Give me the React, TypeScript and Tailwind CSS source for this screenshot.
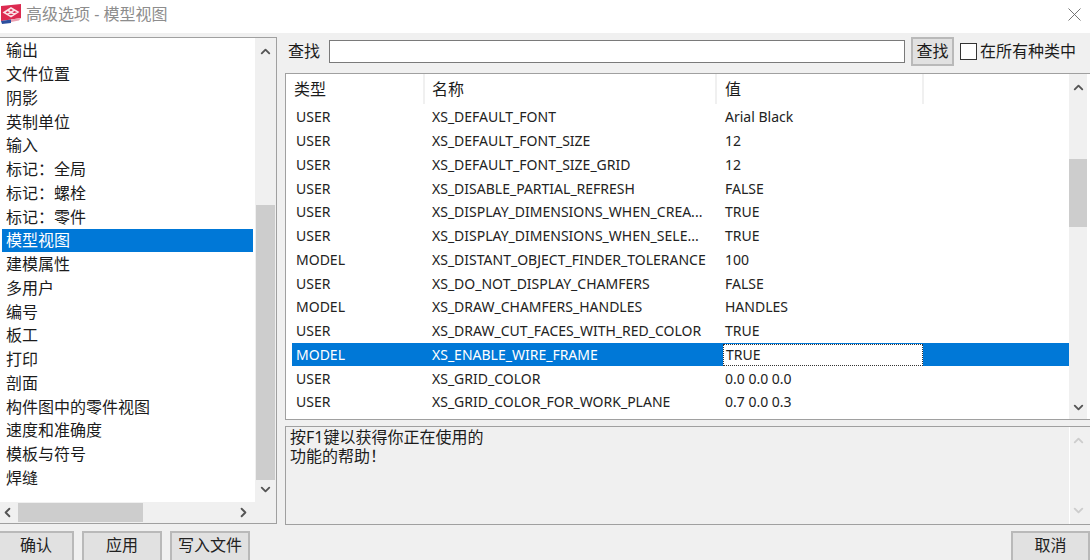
import { ChevronDown, ChevronLeft, ChevronRight, ChevronUp } from 'lucide-react'

const font = "font-['Noto_Sans','Noto_Sans_CJK_SC',sans-serif]"

const categories = [
  '输出', '文件位置', '阴影', '英制单位', '输入', '标记：全局', '标记：螺栓', '标记：零件', '模型视图',
  '建模属性', '多用户', '编号', '板工', '打印', '剖面', '构件图中的零件视图', '速度和准确度', '模板与符号', '焊缝',
]

const rows = [
  ['USER', 'XS_DEFAULT_FONT', 'Arial Black'],
  ['USER', 'XS_DEFAULT_FONT_SIZE', '12'],
  ['USER', 'XS_DEFAULT_FONT_SIZE_GRID', '12'],
  ['USER', 'XS_DISABLE_PARTIAL_REFRESH', 'FALSE'],
  ['USER', 'XS_DISPLAY_DIMENSIONS_WHEN_CREA...', 'TRUE'],
  ['USER', 'XS_DISPLAY_DIMENSIONS_WHEN_SELE...', 'TRUE'],
  ['MODEL', 'XS_DISTANT_OBJECT_FINDER_TOLERANCE', '100'],
  ['USER', 'XS_DO_NOT_DISPLAY_CHAMFERS', 'FALSE'],
  ['MODEL', 'XS_DRAW_CHAMFERS_HANDLES', 'HANDLES'],
  ['USER', 'XS_DRAW_CUT_FACES_WITH_RED_COLOR', 'TRUE'],
  ['MODEL', 'XS_ENABLE_WIRE_FRAME', 'TRUE'],
  ['USER', 'XS_GRID_COLOR', '0.0 0.0 0.0'],
  ['USER', 'XS_GRID_COLOR_FOR_WORK_PLANE', '0.7 0.0 0.3'],
]

function Logo() {
  return (
    <svg width="20" height="20" viewBox="0 0 20 20" className="shrink-0">
      <path d="M0 2 L20 0 V14 L0 17 Z" fill="#dc2a50" />
      <path d="M0 17 L10 15.5 V19 L1 20 Z" fill="#2b4f9e" />
      <path d="M10 15.5 L20 14 L18 16.5 L10 18 Z" fill="#eb9fb0" />
      <path d="M3 8.5 L10 4 L17 8 L10 12.5 Z M6.5 6 L13.5 10.5 M13.5 6 L6.5 10.5" fill="none" stroke="#fbe3e8" strokeWidth="1.5" />
    </svg>
  )
}

function Button({ label, className }: { label: string; className: string }) {
  return (
    <div className={`flex h-[29px] items-center justify-center border-x-2 border-t-2 border-[#b9b9b9] bg-[#e1e1e1] pb-[3px] text-[16px] text-[#222] ${className}`}>
      {label}
    </div>
  )
}

export default function App() {
  return (
    <div className={`flex h-[560px] w-[1090px] flex-col overflow-hidden bg-[#f0f0f0] text-[#1c1c1c] ${font}`}>
      <div className="flex h-[33px] shrink-0 items-center bg-white pb-[5px] pl-[1px] pr-[9px]">
        <Logo />
        <span className="ml-[5px] text-[16px] text-[#8d8d8d]">高级选项 - 模型视图</span>
        <svg width="13" height="13" viewBox="0 0 13 13" className="ml-auto">
          <path d="M0.5 0.5 L12.5 12.5 M12.5 0.5 L0.5 12.5" stroke="#666" strokeWidth="0.9" fill="none" />
        </svg>
      </div>

      <div className="flex min-h-0 flex-1 pt-[4px]">
        <div className="flex h-[487px] w-[277px] shrink-0 flex-col border border-l-0 border-[#a0a0a0] bg-[#f0f0f0]">
          <div className="flex min-h-0 flex-1">
            <div className="flex-1 bg-white px-[2px] pt-[0.5px]">
              {categories.map((c, i) => (
                <div
                  key={c}
                  className={`flex h-[23.75px] items-center pl-[4px] text-[16px] leading-none ${i === 8 ? 'bg-[#0078d7] text-white' : ''}`}
                >
                  {c}
                </div>
              ))}
            </div>
            <div className="flex w-[21px] shrink-0 flex-col items-center">
              <ChevronUp className="mt-[6px] h-[15px] w-[15px] text-[#555]" strokeWidth={3} />
              <div className="mt-[146px] h-[275px] w-[19px] bg-[#cdcdcd]" />
              <ChevronDown className="mt-[2px] h-[15px] w-[15px] text-[#555]" strokeWidth={3} />
            </div>
          </div>
          <div className="flex h-[21px] shrink-0 items-center pr-[21px]">
            <ChevronLeft className="h-[15px] w-[15px] text-[#555]" strokeWidth={3} />
            <div className="ml-[3px] h-[19px] w-[125px] bg-[#cdcdcd]" />
            <ChevronRight className="ml-auto mr-[4px] h-[15px] w-[15px] text-[#555]" strokeWidth={3} />
          </div>
        </div>

        <div className="ml-[8px] flex min-w-0 flex-1 flex-col">
          <div className="mb-[8px] flex h-[28px] shrink-0 items-center">
            <span className="ml-[3px] text-[16px]">查找</span>
            <div className="ml-[9px] h-[23px] w-[576px] border border-[#7a7a7a] bg-white" />
            <div className="ml-[6px] flex h-[29px] w-[43px] items-center justify-center border-2 border-[#b9b9b9] bg-[#e1e1e1] text-[16px]">
              查找
            </div>
            <div className="ml-[6px] h-[17px] w-[17px] border border-[#333] bg-white" />
            <span className="ml-[3px] whitespace-nowrap text-[16px]">在所有种类中</span>
          </div>

          <div className="flex h-[347px] shrink-0 border border-r-0 border-[#a0a0a0] bg-white">
            <div className="min-w-0 flex-1 pl-[6px]">
              <div className="flex h-[30px] items-center text-[16px]">
                <div className="flex h-full w-[133px] items-center border-r-2 border-[#f0f0f0] pl-[2px]">类型</div>
                <div className="flex h-full w-[292px] items-center border-r-2 border-[#f0f0f0] pl-[7px]">名称</div>
                <div className="flex h-full w-[207px] items-center border-r-2 border-[#f0f0f0] pl-[8px]">值</div>
              </div>
              <div className="pt-[1px]">
                {rows.map((r, i) => {
                  const selected = i === 10
                  return (
                    <div
                      key={r[1]}
                      className={`flex h-[23.75px] items-center pt-[1px] text-[14px] leading-none ${selected ? 'bg-[#0078d7] text-white' : 'text-[#222]'}`}
                    >
                      <div className="w-[140px] shrink-0 pl-[4px]">{r[0]}</div>
                      <div className="w-[291px] shrink-0 whitespace-nowrap">{r[1]}</div>
                      <div
                        className={`flex h-full w-[200px] shrink-0 items-center pl-[2px] ${selected ? 'border border-dotted border-[#333] bg-white text-[#222]' : ''}`}
                      >
                        {r[2]}
                      </div>
                    </div>
                  )
                })}
              </div>
            </div>
            <div className="mr-[3px] flex w-[18px] shrink-0 flex-col items-center bg-[#f0f0f0]">
              <ChevronUp className="mt-[6px] h-[15px] w-[15px] text-[#555]" strokeWidth={3} />
              <div className="mt-[64px] h-[68px] w-[18px] bg-[#cdcdcd]" />
              <ChevronDown className="mt-[173px] h-[15px] w-[15px] text-[#555]" strokeWidth={3} />
            </div>
          </div>

          <div className="mt-[6px] flex h-[99px] shrink-0 border border-r-0 border-[#a0a0a0]">
            <div className="min-w-0 flex-1 pl-[4px] pt-[1px] text-[16px] leading-[19px]">
              <div className="h-[19px]">按F1键以获得你正在使用的</div>
              <div className="h-[19px]">功能的帮助！</div>
            </div>
            <div className="mr-[3px] flex w-[18px] shrink-0 flex-col items-center justify-between border-l border-white py-[6px]">
              <ChevronUp className="h-[15px] w-[15px] text-[#cdcdcd]" strokeWidth={3} />
              <ChevronDown className="h-[15px] w-[15px] text-[#cdcdcd]" strokeWidth={3} />
            </div>
          </div>
        </div>
      </div>

      <div className="flex h-[29px] shrink-0">
        <Button label="确认" className="w-[74px] border-l-0" />
        <Button label="应用" className="ml-[8px] w-[80px]" />
        <Button label="写入文件" className="ml-[8px] w-[80px]" />
        <Button label="取消" className="ml-auto w-[79px]" />
      </div>
    </div>
  )
}
